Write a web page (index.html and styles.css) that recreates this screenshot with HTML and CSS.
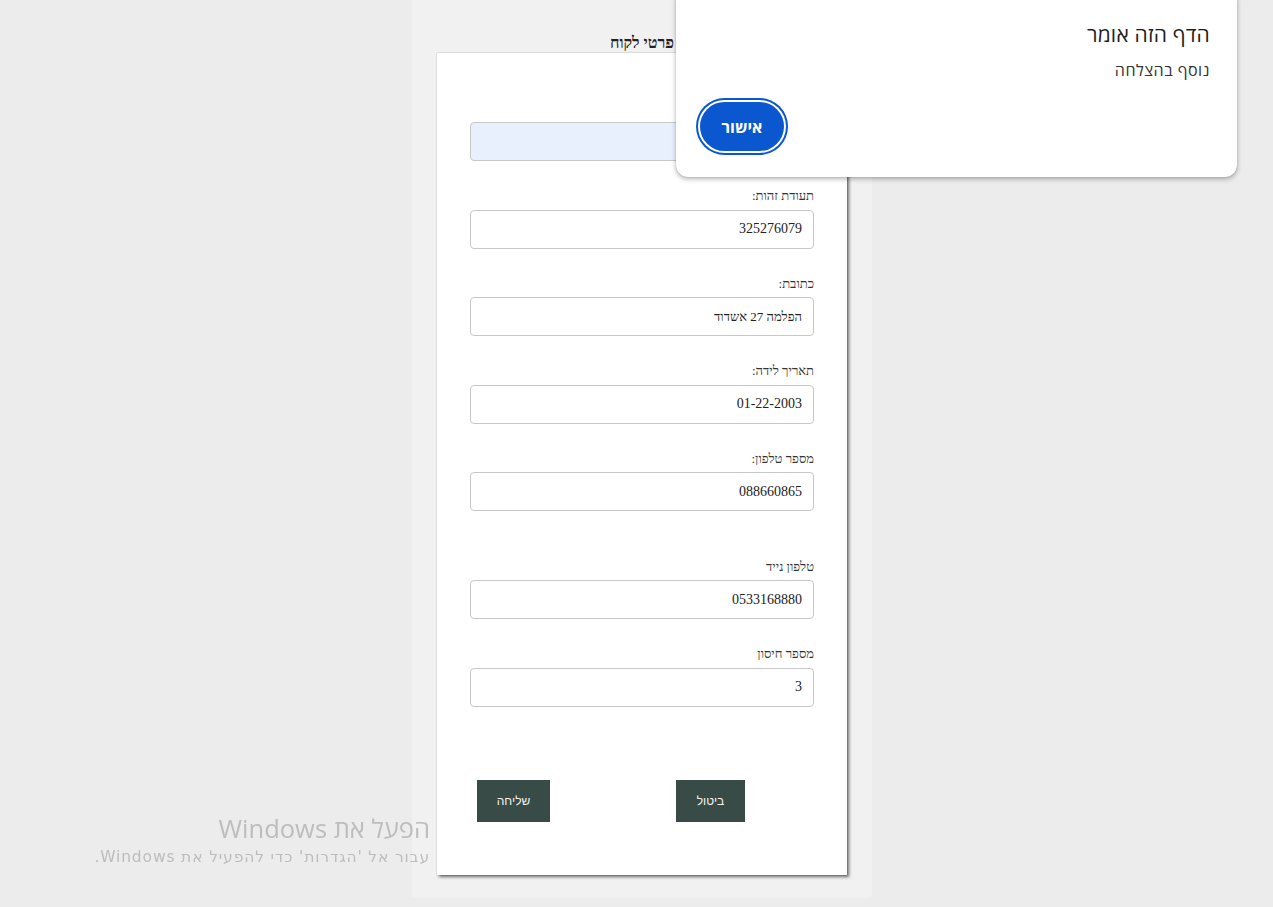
FILE: index.html
```html
<!DOCTYPE html>
<html lang="he">
<head>
<meta charset="utf-8">
<link rel="stylesheet" href="styles.css">
</head>
<body>
<div class="page">
  <div class="panel">
    <h2 class="title">פרטי לקוח</h2>
    <form class="card" dir="rtl">
      <input class="field autofill" type="text" value="">
      <div class="group">
        <label class="label">תעודת זהות:</label>
        <input class="field" type="text" value="325276079">
      </div>
      <div class="group">
        <label class="label">כתובת:</label>
        <input class="field small" type="text" value="הפלמה 27 אשדוד">
      </div>
      <div class="group">
        <label class="label">תאריך לידה:</label>
        <input class="field" type="text" value="01-22-2003">
      </div>
      <div class="group">
        <label class="label">מספר טלפון:</label>
        <input class="field" type="text" value="088660865">
      </div>
      <div class="group extra">
        <label class="label">טלפון נייד</label>
        <input class="field" type="text" value="0533168880">
      </div>
      <div class="group">
        <label class="label">מספר חיסון</label>
        <input class="field" type="text" value="3">
      </div>
      <div class="actions" dir="ltr">
        <button type="button" class="btn send">שליחה</button>
        <button type="button" class="btn cancel">ביטול</button>
      </div>
    </form>
  </div>
</div>

<div class="dialog" dir="rtl">
  <div class="dlg-title">הדף הזה אומר</div>
  <div class="dlg-msg">נוסף בהצלחה</div>
  <div class="dlg-actions">
    <button type="button" class="dlg-btn">אישור</button>
  </div>
</div>

<div class="watermark" dir="rtl">
  <div class="wm-title">הפעל את Windows</div>
  <div class="wm-sub">עבור אל 'הגדרות' כדי להפעיל את Windows.</div>
</div>
</body>
</html>
```
FILE: styles.css
```css
* { box-sizing: border-box; }
html, body { margin: 0; padding: 0; }
body {
  background: #ececec;
  font-family: "Liberation Serif", "DejaVu Serif", serif;
  height: 907px;
  overflow: hidden;
}
.page {
  display: flex;
  padding-left: 412px;
}
.panel {
  width: 460px;
  height: 898px;
  background: #f1f1f1;
  border-radius: 0 0 4px 4px;
  padding-top: 33px;
}
.title {
  margin: 0;
  font-size: 16px;
  line-height: 20px;
  font-weight: bold;
  color: #222;
  text-align: center;
  width: 410px;
  margin-left: 25px;
}
.card {
  margin: 0 0 0 25px;
  width: 410px;
  height: 822px;
  background: #fff;
  box-shadow: 0 0 1px rgba(0,0,0,0.35), 2px 2px 3px rgba(0,0,0,0.55);
  padding: 69px 33px 0 33px;
  display: flex;
  flex-direction: column;
}
.field {
  display: block;
  width: 344px;
  height: 39px;
  border: 1px solid #c8c8c8;
  border-radius: 4px;
  background: #fff;
  padding: 0 11px;
  font-family: "Liberation Serif", "DejaVu Serif", serif;
  font-size: 14px;
  color: #222;
  text-align: right;
  outline: none;
  flex: none;
}
.field.small { font-size: 13px; }
.field.autofill { background: #e8f0fe; }
.group {
  margin-top: 26px;
  display: flex;
  flex-direction: column;
}
.group.extra { margin-top: 46.5px; }
.label {
  display: block;
  font-size: 13px;
  line-height: 18.5px;
  color: #333;
  margin-bottom: 4px;
  text-align: right;
}
.actions {
  margin-top: 73px;
  display: flex;
  gap: 126px;
  padding-left: 7px;
}
.btn {
  height: 42px;
  border: none;
  border-radius: 0;
  background: #394b47;
  color: #f2f2f2;
  font-family: "Liberation Sans", "DejaVu Sans", sans-serif;
  font-size: 12px;
  padding: 0;
}
.btn.send { width: 73px; }
.btn.cancel { width: 69px; }

.dialog {
  position: absolute;
  left: 676px;
  top: -12px;
  width: 561px;
  height: 189px;
  background: #fff;
  border-radius: 12px;
  box-shadow: 0 0 1px rgba(0,0,0,0.3), 0 2px 5px rgba(0,0,0,0.3);
  padding: 32px 27px 0 27px;
  font-family: "Open Sans", "Liberation Sans", "DejaVu Sans", sans-serif;
}
.dlg-title {
  font-size: 21px;
  line-height: 28px;
  color: #1f1f1f;
  text-align: right;
  letter-spacing: 0.2px;
}
.dlg-msg {
  margin-top: 12px;
  font-size: 16px;
  line-height: 20px;
  letter-spacing: 0.5px;
  color: #333;
  text-align: right;
}
.dlg-actions {
  display: flex;
  justify-content: flex-end;
  margin-top: 22px;
  margin-left: -3px;
}
.dlg-btn {
  width: 84px;
  height: 49px;
  border-radius: 25px;
  border: none;
  background: #0b57d0;
  color: #fff;
  font-family: "Open Sans", "Liberation Sans", sans-serif;
  font-weight: bold;
  font-size: 16px;
  box-shadow: 0 0 0 2px #fff, 0 0 0 4px #0b57d0;
  padding: 0;
}
.watermark {
  position: fixed;
  right: 843px;
  top: 811px;
  color: #bdbdbd;
  font-family: "Open Sans", "Liberation Sans", "DejaVu Sans", sans-serif;
  text-align: right;
  white-space: nowrap;
}
.wm-title { font-size: 25.5px; line-height: 35px; }
.wm-sub { font-family: "DejaVu Sans", "Open Sans", sans-serif; font-size: 15.5px; line-height: 22px; letter-spacing: 0.85px; }
```
